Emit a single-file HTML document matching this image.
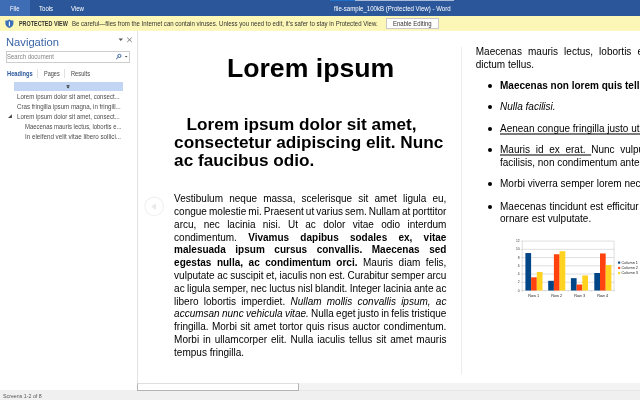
<!DOCTYPE html>
<html>
<head>
<meta charset="utf-8">
<title>file-sample_100kB (Protected View) - Word</title>
<style>
html,body{margin:0;padding:0;}
body{width:640px;height:400px;overflow:hidden;background:#fff;position:relative;font-family:"Liberation Sans",sans-serif;color:#000;}
#root{position:absolute;left:0;top:0;width:640px;height:400px;overflow:hidden;will-change:transform;}
.abs{position:absolute;white-space:nowrap;}
.ui{position:absolute;white-space:nowrap;font-size:6.3px;line-height:8px;transform-origin:0 50%;color:#444;}
#titlebar{left:0;top:0;width:640px;height:16px;background:#2b579a;}
#filetab{left:0;top:0;width:30px;height:16px;background:#3e6db5;}
#titlebar .ui{color:#fff;}
#pv{left:0;top:16px;width:640px;height:14px;background:#fcf7b6;border-bottom:1px solid #fcf9c4;box-sizing:content-box;}
#btn{left:386px;top:18px;width:53px;height:11px;box-sizing:border-box;background:#fefefe;border:1px solid #c8c8c8;}
#nav{left:0;top:31px;width:137px;height:359px;background:#fff;border-right:1px solid #e2e2e2;box-sizing:content-box;}
#search{left:6px;top:51px;width:124px;height:12px;box-sizing:border-box;border:1px solid #cdcdcd;background:#fff;}
#selbar{left:13.9px;top:82.25px;width:108.9px;height:8.6px;background:#c2d5f2;}
.tabsep{position:absolute;width:1px;height:9px;top:68.8px;background:#e1e1e1;}
.hl{color:#4c4c4c;}
#status{left:0;top:390px;width:640px;height:10px;background:#f0f0f0;}
#track{left:138px;top:383px;width:502px;height:8px;background:#f3f3f3;border-bottom:1px solid #e6e6e6;box-sizing:border-box;}
#thumb{left:137px;top:383px;width:162px;height:8px;background:#fff;border:1px solid #b4b4b4;border-top-color:#dedede;box-sizing:border-box;}
#pagediv{left:461px;top:46.75px;width:1px;height:327px;background:#ececec;}
.doc{position:absolute;font-size:10px;line-height:12.75px;}
.ln{position:absolute;left:0;height:12.75px;white-space:nowrap;}
#title{left:226.9px;top:53.4px;font-size:26.67px;line-height:30px;font-weight:bold;}
.doc u{text-decoration-skip-ink:none;text-underline-offset:0.9px;text-decoration-thickness:2px;text-decoration-color:#7c7c7c;}
.h2{font-size:17.18px;line-height:18px;font-weight:bold;}
</style>
</head>
<body>
<div id="root">
<!-- title bar -->
<div id="titlebar" class="abs">
  <div id="filetab" class="abs"></div>
  <div class="abs" style="left:330.3px;top:0;width:24.4px;height:0.8px;background:#1e70ca;"></div>
  <div class="abs" style="left:354.7px;top:0;width:99.1px;height:0.8px;background:#a9bbd9;"></div>
  <span class="ui" id="t_file" style="left:10px;top:4.9px;transform:scaleX(0.9255);">File</span>
  <span class="ui" id="t_tools" style="left:39.4px;top:4.9px;transform:scaleX(0.9590);">Tools</span>
  <span class="ui" id="t_view" style="left:70.6px;top:4.9px;transform:scaleX(0.9596);">View</span>
  <span class="ui" id="t_title" style="left:333.5px;top:4.9px;transform:scaleX(0.9675);">file-sample_100kB (Protected View) - Word</span>
</div>
<!-- protected view bar -->
<div id="pv" class="abs"></div>
<svg class="abs" style="left:5px;top:19px;" width="9" height="10" viewBox="0 0 9 10"><path d="M4.4 0.4 C3.3 1.2 1.9 1.6 0.4 1.6 L0.4 4.6 C0.4 6.7 2.2 8.3 4.4 9.1 C6.6 8.3 8.4 6.7 8.4 4.6 L8.4 1.6 C6.9 1.6 5.5 1.2 4.4 0.4 Z" fill="#3a6fb7"/><rect x="3.85" y="2.5" width="1.1" height="4.6" fill="#fff"/></svg>
<span class="ui" id="t_pv" style="left:19px;top:19.9px;font-weight:bold;color:#333;transform:scaleX(0.8600);">PROTECTED VIEW</span>
<span class="ui" id="t_pvmsg" style="left:72px;top:19.9px;color:#333;transform:scaleX(0.9615);">Be careful—files from the Internet can contain viruses. Unless you need to edit, it's safer to stay in Protected View.</span>
<div id="btn" class="abs"></div>
<span class="ui" id="t_btn" style="left:392.8px;top:19.9px;color:#333;transform:scaleX(0.9526);">Enable Editing</span>

<!-- navigation pane -->
<div id="nav" class="abs"></div>
<span class="ui" id="t_nav" style="left:5.6px;top:34.9px;font-size:10.6px;line-height:14px;color:#3a64a5;transform:scaleX(1.0567);">Navigation</span>
<svg class="abs" style="left:118px;top:37px;" width="16" height="7" viewBox="0 0 16 7"><path d="M0.5 1.5 L5 1.5 L2.75 4 Z" fill="#555"/><path d="M9.2 0.6 L13.8 5 M13.8 0.6 L9.2 5" stroke="#555" stroke-width="0.75" fill="none"/></svg>
<div id="search" class="abs"></div>
<span class="ui" id="t_search" style="left:7.2px;top:53.4px;color:#858585;transform:scaleX(0.9522);">Search document</span>
<svg class="abs" style="left:114px;top:53px;" width="16" height="8" viewBox="0 0 16 8"><circle cx="5.4" cy="2.9" r="1.6" stroke="#2b579a" stroke-width="0.9" fill="none"/><path d="M4.2 4.2 L2.2 6" stroke="#2b579a" stroke-width="1" fill="none"/><path d="M10.9 3.1 L13.5 3.1 L12.2 4.5 Z" fill="#444"/></svg>
<span class="ui" id="t_headings" style="left:7px;top:69.9px;font-weight:bold;color:#2b579a;transform:scaleX(0.9085);">Headings</span>
<div class="tabsep" style="left:37px;"></div>
<span class="ui" id="t_pages" style="left:43.5px;top:69.9px;transform:scaleX(0.8763);">Pages</span>
<div class="tabsep" style="left:64px;"></div>
<span class="ui" id="t_results" style="left:70.5px;top:69.9px;transform:scaleX(0.9048);">Results</span>
<div id="selbar" class="abs"></div>
<svg class="abs" style="left:66px;top:84.8px;" width="5" height="4" viewBox="0 0 5 4"><rect x="0.6" y="0.3" width="2.9" height="0.8" fill="#222"/><path d="M0.6 1.6 L3.5 1.6 L2.05 3.5 Z" fill="#222"/></svg>
<span class="ui hl" id="t_h1" style="left:16.5px;top:92.5px;transform:scaleX(0.9653);">Lorem ipsum dolor sit amet, consect...</span>
<span class="ui hl" id="t_h2" style="left:16.5px;top:102.5px;transform:scaleX(0.9747);">Cras fringilla ipsum magna, in fringill...</span>
<svg class="abs" style="left:7px;top:113px;" width="6" height="6" viewBox="0 0 6 6"><path d="M4.9 1.3 L4.9 5.1 L1 5.1 Z" fill="#444"/></svg>
<span class="ui hl" id="t_h3" style="left:16.5px;top:112.7px;transform:scaleX(0.9653);">Lorem ipsum dolor sit amet, consect...</span>
<span class="ui hl" id="t_h4" style="left:24.7px;top:122.5px;transform:scaleX(0.9442);">Maecenas mauris lectus, lobortis e...</span>
<span class="ui hl" id="t_h5" style="left:24.7px;top:132.5px;transform:scaleX(0.9937);">In eleifend velit vitae libero sollici...</span>

<!-- status bar / scrollbar -->
<div id="status" class="abs"></div>
<div id="track" class="abs"></div>
<div id="thumb" class="abs"></div>
<span class="ui" id="t_status" style="left:2.8px;top:391.5px;font-size:5.5px;color:#555;transform:scaleX(0.9589);">Screens 1-2 of 8</span>

<!-- page nav arrow -->
<svg class="abs" style="left:143px;top:195px;" width="23" height="23" viewBox="143 195 23 23"><circle cx="154.2" cy="206.4" r="9.3" fill="none" stroke="#f0f0f0" stroke-width="1.1"/><path d="M156 203.2 L156 209.9 L151.2 206.5 Z" fill="#e9e9e9"/></svg>

<!-- document page 1 -->
<div id="title" class="abs">Lorem ipsum</div>
<div class="abs h2" style="left:186.5px;top:114.6px;">Lorem ipsum dolor sit amet,</div>
<div class="abs h2" style="left:174.1px;top:133.1px;">consectetur adipiscing elit. Nunc</div>
<div class="abs h2" style="left:174.1px;top:150.6px;">ac faucibus odio.</div>

<div class="doc" id="p1" style="left:174.1px;top:192.1px;width:271.5px;">
<div class="ln" id="L1" style="top:1px;word-spacing:3.404px;">Vestibulum neque massa, scelerisque sit amet ligula eu,</div>
<div class="ln" id="L2" style="top:14px;word-spacing:-0.684px;">congue molestie mi. Praesent ut varius sem. Nullam at porttitor</div>
<div class="ln" id="L3" style="top:27px;word-spacing:4.563px;">arcu, nec lacinia nisi. Ut ac dolor vitae odio interdum</div>
<div class="ln" id="L4" style="top:40px;word-spacing:8.473px;">condimentum. <b>Vivamus dapibus sodales ex, vitae</b></div>
<div class="ln" id="L5" style="top:52px;word-spacing:6.769px;"><b>malesuada ipsum cursus convallis. Maecenas sed</b></div>
<div class="ln" id="L6" style="top:65px;word-spacing:2.777px;"><b>egestas nulla, ac condimentum orci.</b> Mauris diam felis,</div>
<div class="ln" id="L7" style="top:78px;word-spacing:-0.316px;">vulputate ac suscipit et, iaculis non est. Curabitur semper arcu</div>
<div class="ln" id="L8" style="top:91px;word-spacing:-0.398px;">ac ligula semper, nec luctus nisl blandit. Integer lacinia ante ac</div>
<div class="ln" id="L9" style="top:104px;word-spacing:2.458px;">libero lobortis imperdiet. <i>Nullam mollis convallis ipsum, ac</i></div>
<div class="ln" id="L10" style="top:116px;word-spacing:-0.501px;"><i>accumsan nunc vehicula vitae.</i> Nulla eget justo in felis tristique</div>
<div class="ln" id="L11" style="top:129px;word-spacing:0.621px;">fringilla. Morbi sit amet tortor quis risus auctor condimentum.</div>
<div class="ln" id="L12" style="top:142px;word-spacing:1.170px;">Morbi in ullamcorper elit. Nulla iaculis tellus sit amet mauris</div>
<div class="ln last" id="L13" style="top:155px">tempus fringilla.</div>
</div>

<!-- document page 2 -->
<div id="pagediv" class="abs"></div>
<div class="doc" id="p2" style="left:475.75px;top:46.1px;width:271.5px;">
<div class="ln" id="L14" style="top:0px;word-spacing:3.329px;">Maecenas mauris lectus, lobortis et purus mattis, blandit</div>
<div class="ln last" id="L15" style="top:13px">dictum tellus.</div>
</div>
<div class="doc" id="ul" style="left:500px;top:80.1px;width:247.25px;">
<div class="ln last" id="L16" style="top:0px"><b>Maecenas non lorem quis tellus placerat varius.</b></div>
<div class="ln last" id="L17" style="top:21px"><i>Nulla facilisi.</i></div>
<div class="ln last" id="L18" style="top:43px"><u>Aenean congue fringilla justo ut aliquam.</u></div>
<div class="ln" id="L19" style="top:64px;word-spacing:2.932px;"><u>Mauris id ex erat. </u>Nunc vulputate neque vitae justo</div>
<div class="ln last" id="L20" style="top:77px">facilisis, non condimentum ante sagittis.</div>
<div class="ln last" id="L21" style="top:98px">Morbi viverra semper lorem nec molestie.</div>
<div class="ln" id="L22" style="top:121px;word-spacing:0.523px;">Maecenas tincidunt est efficitur ligula euismod, sit amet</div>
<div class="ln last" id="L23" style="top:133px">ornare est vulputate.</div>
</div>

<div class="abs" style="left:487.75px;top:83.95px;width:4.3px;height:4.3px;border-radius:50%;background:#000;"></div>
<div class="abs" style="left:487.75px;top:104.95px;width:4.3px;height:4.3px;border-radius:50%;background:#000;"></div>
<div class="abs" style="left:487.75px;top:126.95px;width:4.3px;height:4.3px;border-radius:50%;background:#000;"></div>
<div class="abs" style="left:487.75px;top:147.95px;width:4.3px;height:4.3px;border-radius:50%;background:#000;"></div>
<div class="abs" style="left:487.75px;top:181.95px;width:4.3px;height:4.3px;border-radius:50%;background:#000;"></div>
<div class="abs" style="left:487.75px;top:204.85px;width:4.3px;height:4.3px;border-radius:50%;background:#000;"></div>
<!-- chart -->
<svg id="chart" class="abs" style="left:510px;top:235px;font-family:'Liberation Sans',sans-serif;" width="130" height="70" viewBox="510 235 130 70"><path d="M520.85 290.50 H614.10" stroke="#b8b8b8" stroke-width="0.45" fill="none"/><path d="M520.85 282.27 H614.10" stroke="#b8b8b8" stroke-width="0.45" fill="none"/><path d="M520.85 274.03 H614.10" stroke="#b8b8b8" stroke-width="0.45" fill="none"/><path d="M520.85 265.80 H614.10" stroke="#b8b8b8" stroke-width="0.45" fill="none"/><path d="M520.85 257.57 H614.10" stroke="#b8b8b8" stroke-width="0.45" fill="none"/><path d="M520.85 249.33 H614.10" stroke="#b8b8b8" stroke-width="0.45" fill="none"/><path d="M520.85 241.10 H614.10" stroke="#b8b8b8" stroke-width="0.45" fill="none"/><path d="M522.25 241.10 V291.90 M614.10 241.10 V291.90" stroke="#b8b8b8" stroke-width="0.45" fill="none"/><path d="M545.21 290.50 V291.90" stroke="#b8b8b8" stroke-width="0.45" fill="none"/><path d="M568.17 290.50 V291.90" stroke="#b8b8b8" stroke-width="0.45" fill="none"/><path d="M591.14 290.50 V291.90" stroke="#b8b8b8" stroke-width="0.45" fill="none"/><rect x="525.40" y="253.04" width="5.70" height="37.46" fill="#004586"/><rect x="531.10" y="277.33" width="5.70" height="13.17" fill="#ff420e"/><rect x="536.80" y="271.98" width="5.70" height="18.52" fill="#ffd320"/><rect x="548.20" y="280.83" width="5.70" height="9.67" fill="#004586"/><rect x="553.90" y="254.27" width="5.70" height="36.23" fill="#ff420e"/><rect x="559.60" y="251.19" width="5.70" height="39.31" fill="#ffd320"/><rect x="570.90" y="278.15" width="5.70" height="12.35" fill="#004586"/><rect x="576.60" y="284.53" width="5.70" height="5.97" fill="#ff420e"/><rect x="582.30" y="275.47" width="5.70" height="15.03" fill="#ffd320"/><rect x="594.30" y="273.00" width="5.70" height="17.50" fill="#004586"/><rect x="600.00" y="253.45" width="5.70" height="37.05" fill="#ff420e"/><rect x="605.70" y="265.10" width="5.70" height="25.40" fill="#ffd320"/><text x="519.65" y="291.65" text-anchor="end" font-size="3.3" fill="#333">0</text><text x="519.65" y="283.42" text-anchor="end" font-size="3.3" fill="#333">2</text><text x="519.65" y="275.18" text-anchor="end" font-size="3.3" fill="#333">4</text><text x="519.65" y="266.95" text-anchor="end" font-size="3.3" fill="#333">6</text><text x="519.65" y="258.72" text-anchor="end" font-size="3.3" fill="#333">8</text><text x="519.65" y="250.48" text-anchor="end" font-size="3.3" fill="#333">10</text><text x="519.65" y="242.25" text-anchor="end" font-size="3.3" fill="#333">12</text><text x="533.73" y="296.90" text-anchor="middle" font-size="3.8" fill="#222">Row 1</text><text x="556.69" y="296.90" text-anchor="middle" font-size="3.8" fill="#222">Row 2</text><text x="579.66" y="296.90" text-anchor="middle" font-size="3.8" fill="#222">Row 3</text><text x="602.62" y="296.90" text-anchor="middle" font-size="3.8" fill="#222">Row 4</text><rect x="618.1" y="261.55" width="2.1" height="2.1" fill="#004586"/><text x="621.6" y="263.90" font-size="3.7" textLength="16.4" lengthAdjust="spacingAndGlyphs" fill="#222">Column 1</text><rect x="618.1" y="266.85" width="2.1" height="2.1" fill="#ff420e"/><text x="621.6" y="269.20" font-size="3.7" textLength="16.4" lengthAdjust="spacingAndGlyphs" fill="#222">Column 2</text><rect x="618.1" y="272.05" width="2.1" height="2.1" fill="#ffd320"/><text x="621.6" y="274.40" font-size="3.7" textLength="16.4" lengthAdjust="spacingAndGlyphs" fill="#222">Column 3</text></svg>
</div>
</body>
</html>
